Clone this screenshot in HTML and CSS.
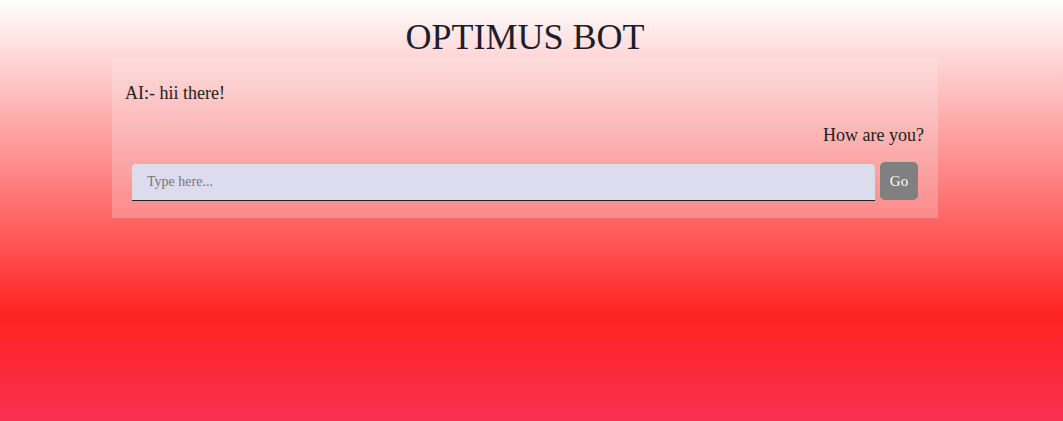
FILE: index.html
```html
<!DOCTYPE html>
<html lang="en">
<head>
<meta charset="utf-8">
<title>Optimus Bot</title>
<link rel="stylesheet" href="styles.css">
</head>
<body>
<div class="page">
  <div class="app">
    <h1 class="title">OPTIMUS BOT</h1>
    <div class="chat">
      <div class="msg msg-ai">AI:- hii there!</div>
      <div class="msg msg-user">How are you?</div>
      <form class="input-row" onsubmit="return false">
        <input class="chat-input" type="text" placeholder="Type here...">
        <button class="go-btn" type="submit">Go</button>
      </form>
    </div>
  </div>
</div>
</body>
</html>
```

FILE: styles.css
```css
html, body {
  margin: 0;
  padding: 0;
  height: 100%;
}
body {
  font-family: "Liberation Serif", "Times New Roman", serif;
  color: #222;
  background: linear-gradient(to bottom, #ffffff 0%, #ff2222 75%, #f93050 100%);
  background-attachment: fixed;
  min-height: 421px;
}
.page {
  padding-left: 112px;
}
.app {
  width: 826px;
}
.title {
  margin: 0;
  padding-top: 17px;
  font-size: 36px;
  font-weight: normal;
  text-align: center;
  color: #1e1e2a;
  line-height: 41px;
  height: 41px;
}
.chat {
  background: rgba(245, 240, 240, 0.26);
  padding: 25px 20px 17px 20px;
}
.msg {
  font-size: 18px;
  line-height: 21px;
  color: #222;
}
.msg-ai {
  margin-left: -7px;
}
.msg-user {
  text-align: right;
  margin-right: -6px;
  margin-top: 21px;
}
.input-row {
  display: flex;
  align-items: flex-start;
  gap: 5px;
  margin-top: 16px;
}
.chat-input {
  flex: 1;
  box-sizing: border-box;
  height: 37px;
  margin-top: 2px;
  padding: 0 15px;
  border: none;
  border-bottom: 1px solid #222;
  border-radius: 4px 4px 0 0;
  background: #dcdcee;
  font-family: "Liberation Serif", "Times New Roman", serif;
  font-size: 14px;
  color: #222;
  outline: none;
}
.chat-input::placeholder {
  color: #777;
}
.go-btn {
  box-sizing: border-box;
  width: 38px;
  height: 38px;
  border: none;
  border-radius: 5px;
  background: #808080;
  color: #fff;
  font-family: "Liberation Serif", "Times New Roman", serif;
  font-size: 15px;
  padding: 0;
}
```
